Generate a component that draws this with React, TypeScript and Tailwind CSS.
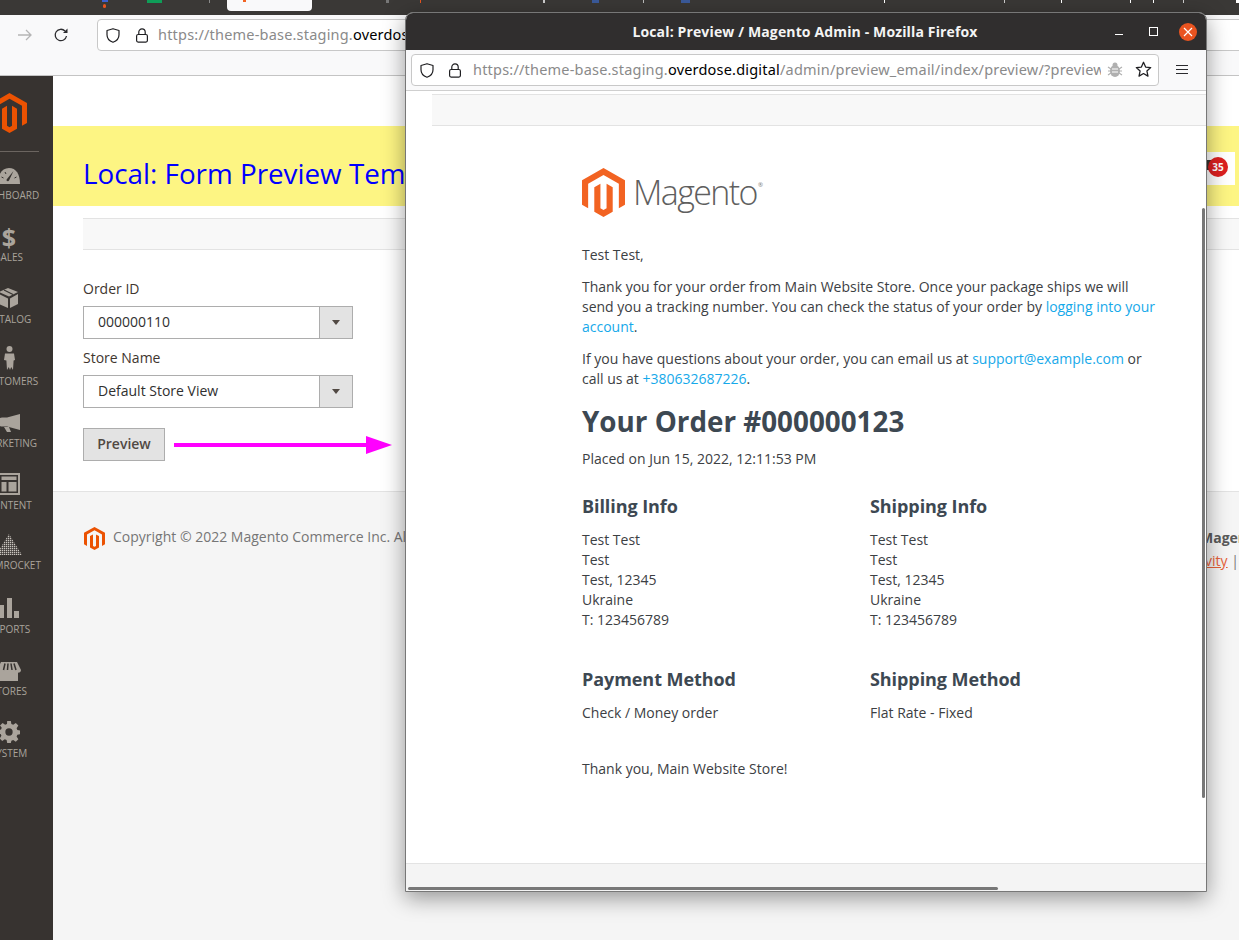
import React from "react";

const MAG = "M12 24l-4.455-2.572v-12l2.97-1.715v12.001l1.485.902 1.485-.902V7.713l2.97 1.715v12L12 24zM22.391 6v12l-2.969 1.714V7.713L12 3.43 4.574 7.713v12.001L1.609 18V6L12 0l10.391 6z";

function MagentoMark({ className, color }: { className: string; color: string }) {
  return (
    <svg viewBox="1.6 0 20.8 24" className={className} preserveAspectRatio="none">
      <path d={MAG} fill={color} />
    </svg>
  );
}

function Shield({ className }: { className: string }) {
  return (
    <svg viewBox="0 0 16 16" className={className} fill="none" stroke="#1f1f22" strokeWidth="1.2">
      <path d="M8 1.2 14 3v4.2c0 4-2.6 6.4-6 7.6-3.4-1.2-6-3.6-6-7.6V3z" strokeLinejoin="round" />
    </svg>
  );
}

function Lock({ className }: { className: string }) {
  return (
    <svg viewBox="0 0 16 16" className={className} fill="none" stroke="#1f1f22" strokeWidth="1.2">
      <rect x="2.6" y="7" width="10.8" height="7.6" rx="1.5" />
      <path d="M4.8 7V4.6a3.2 3.2 0 0 1 6.4 0V7" />
    </svg>
  );
}

const I = "#aaa49c";
const D = "#373330";

const navIcons: React.ReactNode[] = [
  <svg viewBox="0 0 22 16" className="w-[22px] h-[16px]">
    <path d="M0 16C0 6 4 0 11 0s11 6 11 16z" fill={I} />
    <path d="M15.500 3l-4.500 9.500c-.8 1.500-3 .5-2.400-1z" fill={D} />
    <path d="M3.500 9l2 1M7 4l1 2M18.500 9l-2 1" stroke={D} strokeWidth="1" />
  </svg>,
  <span className="font-['Open_Sans',sans-serif] font-bold text-[25px] leading-[26px] text-[#aaa49c] mb-[2px]">$</span>,
  <svg viewBox="0 0 20 20" className="w-[20px] h-[20px] mb-[4px]">
    <path d="M9 0l10 4-9 4.500L0 4z" fill={I} />
    <path d="M0 6l9 4.500V20l-9-4zM11 10.500L19 6v10l-8 4z" fill={I} />
    <path d="M5 2l9 4.500" stroke={D} strokeWidth="1.200" />
  </svg>,
  <svg viewBox="0 0 11 24" className="w-[11px] h-[24px] mb-[8px]">
    <circle cx="5.500" cy="3" r="3" fill={I} />
    <path d="M1 7.500h9l1 6.500-1.400.6-.6 9.400-1.800-3-1.200 3-1.200-3-1.800 3-.6-9.400L0 14z" fill={I} />
  </svg>,
  <svg viewBox="0 0 22 18" className="w-[22px] h-[18px] mb-[2px]">
    <path d="M22 0v16L9 12.500H4C2 12.500 0 11 0 8s2-4.500 4-4.500h5z" fill={I} />
    <path d="M6 13h5l2 5H9z" fill={I} />
  </svg>,
  <svg viewBox="0 0 22 22" className="w-[22px] h-[22px] mb-[4px]">
    <rect x="1" y="1" width="20" height="20" fill="none" stroke={I} strokeWidth="2" />
    <rect x="3.500" y="3.500" width="15" height="3.500" fill={I} />
    <rect x="3.500" y="9" width="5" height="9.500" fill={I} />
    <rect x="10.500" y="9" width="8" height="9.500" fill={I} />
  </svg>,
  <svg viewBox="0 0 26 21" className="w-[26px] h-[21px] mb-[8px]">
    <defs>
      <pattern id="dots" width="2" height="2" patternUnits="userSpaceOnUse">
        <rect width="1.300" height="1.300" fill="#c9c4bd" />
      </pattern>
    </defs>
    <path d="M13 0L26 21H0z" fill="url(#dots)" />
  </svg>,
  <svg viewBox="0 0 20 20" className="w-[20px] h-[20px] mb-[4px]">
    <rect x="0" y="7" width="5" height="13" fill={I} />
    <rect x="8" y="0" width="5" height="20" fill={I} />
    <rect x="15" y="13" width="5" height="7" fill={I} />
  </svg>,
  <svg viewBox="0 0 24 19" className="w-[24px] h-[19px] mb-[2px]">
    <path d="M4 0h16l4 8c0 2-2 3-3 2.600V19H3v-8.400C2 11 0 10 0 8z" fill={I} />
    <path d="M8 1.500L6.500 8M11 1.500L10.500 8M14 1.500L15 8M17 1.500L19 8" stroke={D} strokeWidth="1.500" />
  </svg>,
  <svg viewBox="0 0 24 24" className="w-[22px] h-[22px] mb-[4px]">
    <path
      fillRule="evenodd"
      fill={I}
      d="M10 0h4l.6 3.300 2 .8L19.400 2.200l2.800 2.800-1.900 2.800.8 2 3.300.6v4l-3.300.6-.8 2 1.900 2.800-2.800 2.800-2.800-1.900-2 .8L14 24h-4l-.6-3.300-2-.8-2.800 1.900-2.800-2.800 1.900-2.800-.8-2L0 14v-4l3.300-.6.8-2L2.200 5l2.800-2.800 2.800 1.900 2-.8zM12 8a4 4 0 1 0 0 8 4 4 0 0 0 0-8z"
    />
  </svg>,
];

const navLabels = ["DASHBOARD", "SALES", "CATALOG", "CUSTOMERS", "MARKETING", "CONTENT", "TEAMROCKET", "REPORTS", "STORES", "SYSTEM"];

function Sidebar() {
  return (
    <aside className="w-[53px] shrink-0 bg-[#373330] overflow-hidden">
      <div className="w-[88px] ml-[-35px] font-['Open_Sans',sans-serif]">
        <div className="h-[75px] pt-[17px] flex flex-col items-center">
          <MagentoMark className="w-[35px] h-[40px]" color="#eb5202" />
        </div>
        <div className="ml-[12px] w-[62px] h-px bg-[#6b6560]" />
        <div className="pt-[11px]">
          {navIcons.map((ic, i) => (
            <div key={navLabels[i]} className="h-[62px] flex flex-col items-center justify-start">
              <div className="h-[26px] w-[88px] flex items-center justify-center">{ic}</div>
              <div className={`text-[10px] leading-[14px] text-[#a9a39b] whitespace-nowrap ${i === 6 ? "mt-[-3px]" : "mt-[-1px]"}`}>{navLabels[i]}</div>
            </div>
          ))}
        </div>
      </div>
    </aside>
  );
}

function Select({ value }: { value: string }) {
  return (
    <div className="w-[270px] h-[33px] border border-[#adadad] bg-white flex text-[14px] text-[#303030]">
      <div className="flex-1 pl-[14px] leading-[30px]">{value}</div>
      <div className="w-[33px] bg-[#e3e3e3] border-l border-[#adadad] flex items-center justify-center">
        <div className="w-0 h-0 border-x-[4px] border-x-transparent border-t-[5px] border-t-[#514943]" />
      </div>
    </div>
  );
}

function BackPage() {
  return (
    <div className="flex-1 flex flex-col min-h-0 font-['Open_Sans',sans-serif]">
      <div className="bg-white h-[416px] shrink-0 border-b border-[#e3e3e3]">
        <div className="h-[50px]" />
        <div className="h-[80px] bg-[#fdf583] flex items-center pl-[30px] relative">
          <h1 className="text-[27.8px] leading-[38px] text-[#0000ff] mt-[14px] whitespace-nowrap">Local: Form Preview Template</h1>
          <div className="absolute right-[4px] top-[26px] w-[29px] h-[33px] bg-white">
            <div className="absolute left-[-8px] top-[8px] w-[14px] h-[10px] bg-[#373330]" />
            <div className="absolute left-[2px] top-[5px] w-[20px] h-[20px] rounded-full bg-[#dd2020] text-white text-[10px] font-bold leading-[20px] text-center">35</div>
          </div>
        </div>
        <div className="ml-[30px] mt-[12px] h-[32px] bg-[#f8f8f8] border-y border-[#e3e3e3]" />
        <div className="pl-[30px] pt-[29px]">
          <div className="text-[14px] leading-[20px] text-[#41362f]">Order ID</div>
          <div className="mt-[7px]"><Select value="000000110" /></div>
          <div className="text-[14px] leading-[20px] text-[#41362f] mt-[9px]">Store Name</div>
          <div className="mt-[7px]"><Select value="Default Store View" /></div>
          <div className="flex items-center mt-[20px]">
            <div className="w-[82px] h-[33px] bg-[#e3e3e3] border border-[#adadad] text-[14px] font-semibold text-[#514943] leading-[30px] text-center">Preview</div>
            <div className="ml-[9px] h-[4px] w-[192px] bg-[#ff00ff]" />
            <div className="w-0 h-0 border-y-[9px] border-y-transparent border-l-[26px] border-l-[#ff00ff]" />
          </div>
        </div>
      </div>
      <div className="flex-1 bg-[#f5f5f5] pl-[30px] pt-[35px] relative">
        <div className="flex items-start">
          <MagentoMark className="w-[21px] h-[23px] ml-[1px]" color="#eb5202" />
          <span className="ml-[8px] leading-[20px] text-[14px] text-[#767676] whitespace-nowrap">Copyright © 2022 Magento Commerce Inc. All rights reserved.</span>
        </div>
        <div className="absolute left-[1147px] top-[35px] text-[14px] font-bold text-[#5a5a5a] whitespace-nowrap">Magento</div>
        <div className="absolute left-[1128px] top-[58px] text-[14px] text-[#767676] whitespace-nowrap">
          <span className="underline text-[#e8623a]">Activity</span> |
        </div>
      </div>
    </div>
  );
}

const ticks: [string, string][] = [
  ["left-[209px] w-[1px] bg-[#8a8a8a]", "a"],
  ["left-[386px] w-[3px] bg-[#777777]", "b"],
  ["left-[420px] w-[1px] bg-[#e8541e]", "c"],
  ["left-[543px] w-[2px] bg-[#cccccc]", "d"],
  ["left-[592px] w-[7px] bg-[#3b5a9a]", "e"],
  ["left-[643px] w-[1px] bg-[#bbbbbb]", "f"],
  ["left-[681px] w-[9px] bg-[#3b5a9a]", "g"],
  ["left-[884px] w-[1px] bg-white", "h"],
  ["left-[1004px] w-[1px] bg-[#cccccc]", "i"],
  ["left-[1061px] w-[1px] bg-white", "j"],
  ["left-[1130px] w-[1px] bg-white", "k"],
  ["left-[1153px] w-[1px] bg-white", "l"],
  ["left-[1183px] w-[1px] bg-[#cccccc]", "m"],
  ["left-[1236px] w-[3px] bg-white", "n"],
];

function Chrome() {
  return (
    <div className="h-[76px] shrink-0 flex flex-col">
      <div className="h-[15px] bg-[#3a3836] relative overflow-hidden">
        <div className="absolute left-[227px] top-[-4px] w-[85px] h-[15px] bg-[#f9f9fa] rounded-[4px]">
          <div className="absolute left-[16px] top-[4px] w-[3px] h-[2px] bg-[#f26322]" />
        </div>
        <div className="absolute left-[147px] top-0 w-[15px] h-[3px] bg-[#0f9d58]" />
        <div className="absolute left-[102px] top-0 w-[6px] h-[2px] bg-[#3b5fd0]" />
        <div className="absolute left-[103px] top-[4px] w-[3px] h-[4px] rounded-full bg-[#e8541e]" />
        {ticks.map(([c, k]) => (
          <div key={k} className={`absolute top-0 h-[3px] ${c}`} />
        ))}
      </div>
      <div className="flex-1 bg-[#f9f9fa] border-b border-[#c4c4c4] pt-[4px] pl-[17px] font-['Noto_Sans',sans-serif] overflow-hidden">
        <div className="flex items-start">
          <svg viewBox="0 0 16 16" className="w-[16px] h-[16px] mt-[8px] shrink-0" fill="none" stroke="#b5b5b5" strokeWidth="1.300">
            <path d="M1 8h13M9 3l5 5-5 5" />
          </svg>
          <svg viewBox="0 0 16 16" className="w-[16px] h-[16px] mt-[8px] ml-[20px] shrink-0" fill="none" stroke="#2b2b2e" strokeWidth="1.300">
            <path d="M13.500 9A5.700 5.700 0 1 1 12 4" />
            <path d="M14.500 1.500v4.500H10z" fill="#2b2b2e" stroke="none" />
          </svg>
          <div className="ml-[28px] w-[1200px] shrink-0 h-[32px] bg-white border border-[#c8c8c8] rounded-[4px] flex items-center pl-[7px]">
            <Shield className="w-[16px] h-[17px]" />
            <Lock className="w-[16px] h-[17px] ml-[13px]" />
            <span className="ml-[8px] text-[14.5px] tracking-[0.2px] text-[#8a8a8a] whitespace-nowrap">
              https://theme-base.staging.<span className="text-black">overdose.digital</span>/admin
            </span>
          </div>
        </div>
      </div>
    </div>
  );
}

function Para({ children, className = "" }: { children: React.ReactNode; className?: string }) {
  return <p className={`text-[14px] leading-[20px] text-[#3c4043] ${className}`}>{children}</p>;
}

function A({ children }: { children: React.ReactNode }) {
  return <span className="text-[#16a9ea]">{children}</span>;
}

function Address() {
  return (
    <div className="mt-[12px] text-[14px] leading-[20px] text-[#3c4043]">
      <div>Test Test</div>
      <div>Test</div>
      <div>Test, 12345</div>
      <div>Ukraine</div>
      <div>T: 123456789</div>
    </div>
  );
}

function H3({ children }: { children: React.ReactNode }) {
  return <h3 className="text-[18px] leading-[24px] font-bold text-[#3d4852] tracking-[-0.07px]">{children}</h3>;
}

function Popup() {
  return (
    <div className="absolute left-[405px] top-[12px] w-[802px] h-[880px] bg-white border border-[#777777] rounded-t-[8px] flex flex-col overflow-hidden shadow-[0_6px_22px_rgba(0,0,0,0.4)]">
      <div className="h-[37px] shrink-0 bg-[#302e2e] relative flex items-center justify-center font-['Open_Sans',sans-serif]">
        <span className="text-[14px] font-bold text-[#f4f4f4] tracking-[0.14px] mr-[2px]">Local: Preview / Magento Admin - Mozilla Firefox</span>
        <div className="absolute right-[0px] top-0 h-full flex items-center">
          <div className="w-[8px] h-px bg-white mr-[26px] mt-[5px]" />
          <div className="w-[9px] h-[9px] border border-white mr-[21px]" />
          <div className="w-[18px] h-[18px] rounded-full bg-[#e95420] flex items-center justify-center mr-[9px]">
            <svg viewBox="0 0 10 10" className="w-[10px] h-[10px]" stroke="white" strokeWidth="1.200"><path d="M1 1l8 8M9 1l-8 8" /></svg>
          </div>
        </div>
      </div>
      <div className="h-[41px] shrink-0 bg-[#f9f9fa] border-b border-[#cfcfcf] pt-[4px] pl-[5px] flex items-start font-['Noto_Sans',sans-serif]">
        <div className="w-[748px] h-[32px] bg-white border border-[#c8c8c8] rounded-[4px] flex items-center pl-[7px] relative overflow-hidden">
          <Shield className="w-[16px] h-[17px]" />
          <Lock className="w-[16px] h-[17px] ml-[12px]" />
          <span className="ml-[10px] text-[14.5px] tracking-[0.2px] text-[#8a8a8a] whitespace-nowrap overflow-hidden w-[628px]">
            https://theme-base.staging.<span className="text-black">overdose.digital</span>/admin/preview_email/index/preview/?preview
          </span>
          <svg viewBox="0 0 16 16" className="absolute left-[695px] top-[7px] w-[16px] h-[16px]" fill="#b0b0b0">
            <ellipse cx="8" cy="9" rx="5" ry="6" />
            <circle cx="8" cy="3" r="2.500" />
            <path d="M1 5l3 2M15 5l-3 2M1 9h3M15 9h-3M1 13l3-2M15 13l-3-2" stroke="#b0b0b0" strokeWidth="1.200" />
            <path d="M5 7h6M5 10h6" stroke="#fff" strokeWidth="1.200" />
          </svg>
          <svg viewBox="0 0 16 16" className="absolute left-[723px] top-[6px] w-[17px] h-[17px]" fill="none" stroke="#1f1f22" strokeWidth="1.200">
            <path d="M8 1.200l2 4.500 4.800.5-3.600 3.200 1 4.800L8 11.800l-4.200 2.400 1-4.800L1.200 6.200 6 5.700z" strokeLinejoin="round" />
          </svg>
        </div>
        <div className="ml-[17px] mt-[11px] w-[12px] flex flex-col gap-[3px]">
          <div className="h-px bg-[#2b2b2e]" />
          <div className="h-px bg-[#2b2b2e]" />
          <div className="h-px bg-[#2b2b2e]" />
        </div>
      </div>
      <div className="flex-1 relative flex flex-col min-h-0 font-['Open_Sans',sans-serif]">
        <div className="ml-[26px] mt-[3px] h-[32px] bg-[#f8f8f8] border-y border-[#e3e3e3] shrink-0" />
        <div className="flex-1 pl-[176px] pt-[42px]">
          <div className="flex items-center h-[49px]">
            <MagentoMark className="w-[43px] h-[49px]" color="#f26322" />
            <span className="ml-[8px] text-[34px] tracking-[-1.6px] text-[#5f5f5f] font-light leading-[49px]">Magento</span>
            <span className="ml-[1px] text-[6px] text-[#777777] mb-[14px]">®</span>
          </div>
          <Para className="mt-[28px]">Test Test,</Para>
          <Para className="mt-[12px] w-[580px]">
            Thank you for your order from Main Website Store. Once your package ships we will send you a tracking number. You can check the status of your order by <A>logging into your account</A>.
          </Para>
          <Para className="mt-[12px] w-[580px]">
            If you have questions about your order, you can email us at <A>support@example.com</A> or call us at <A>+380632687226</A>.
          </Para>
          <h1 className="mt-[13px] text-[27.8px] leading-[38px] font-bold text-[#3d4852]">Your Order #000000123</h1>
          <Para className="mt-[9px]">Placed on Jun 15, 2022, 12:11:53 PM</Para>
          <div className="grid grid-cols-[288px_288px] mt-[25px]">
            <div><H3>Billing Info</H3><Address /></div>
            <div><H3>Shipping Info</H3><Address /></div>
            <div className="mt-[37px]"><H3>Payment Method</H3><Para className="mt-[12px]">Check / Money order</Para></div>
            <div className="mt-[37px]"><H3>Shipping Method</H3><Para className="mt-[12px]">Flat Rate - Fixed</Para></div>
          </div>
          <Para className="mt-[36px]">Thank you, Main Website Store!</Para>
        </div>
        <div className="h-[28px] shrink-0 bg-[#f4f4f4] border-t border-[#e3e3e3]" />
        <div className="absolute right-[1px] top-[117px] w-[3px] h-[590px] bg-[#777777] rounded-full" />
        <div className="absolute left-[2px] bottom-[1px] w-[590px] h-[3px] bg-[#777777] rounded-full" />
      </div>
    </div>
  );
}

export default function App() {
  return (
    <div className="relative w-[1239px] h-[940px] overflow-hidden bg-[#f5f5f5] flex flex-col">
      <Chrome />
      <div className="flex-1 flex min-h-0">
        <Sidebar />
        <BackPage />
      </div>
      <Popup />
    </div>
  );
}
